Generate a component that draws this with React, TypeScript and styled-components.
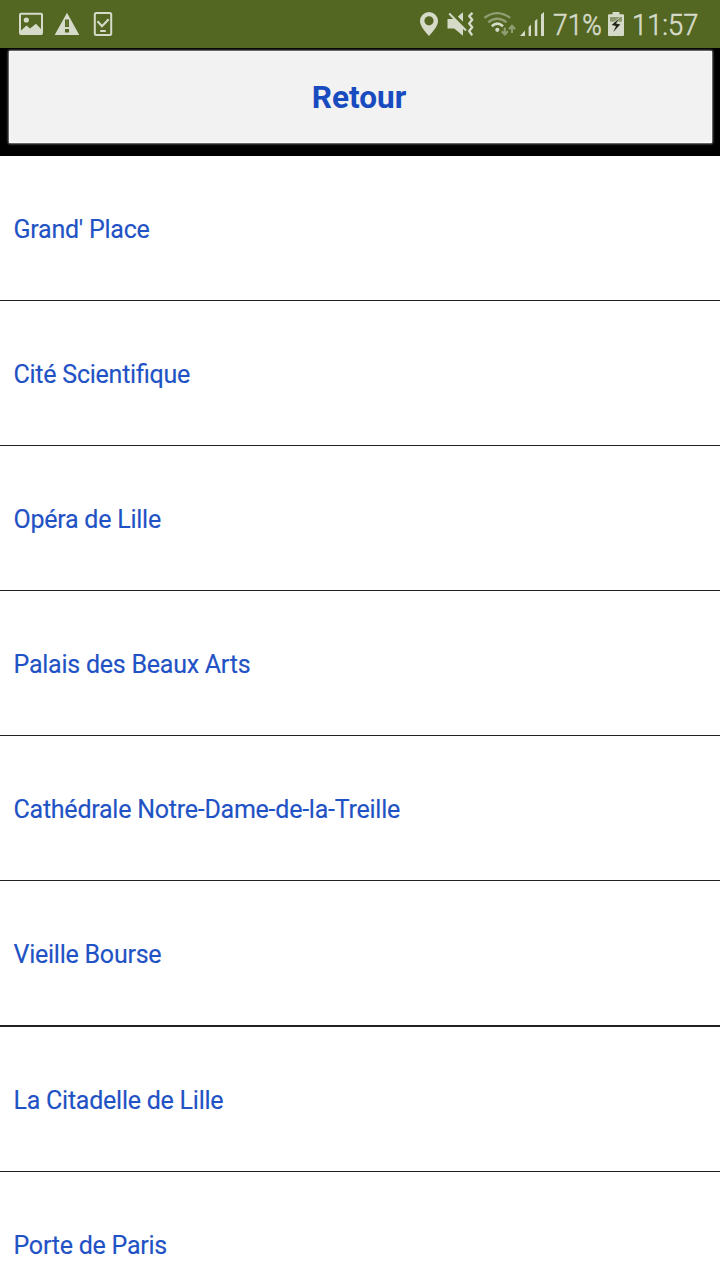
import React from "react";
import styled, { createGlobalStyle } from "styled-components";

const GlobalStyle = createGlobalStyle`
  * { box-sizing: border-box; }
  html, body { margin: 0; padding: 0; }
  body { background: #fff; font-family: Roboto, sans-serif; overflow: hidden; }
`;

const Screen = styled.div`
  width: 720px;
  height: 1280px;
  overflow: hidden;
  display: flex;
  flex-direction: column;
  background: #fff;
`;

const StatusBar = styled.header`
  flex: none;
  height: 48px;
  display: flex;
  justify-content: space-between;
  background: #536723;
  color: #d6dbc9;
`;

const StatusGroup = styled.div<{ $start?: number }>`
  display: flex;
  align-items: center;
  padding-left: ${(p) => p.$start ?? 0}px;
`;

const Icon = styled.svg<{ $gap?: number }>`
  display: block;
  flex: none;
  height: 24px;
  margin-right: ${(p) => p.$gap ?? 0}px;
  fill: currentColor;
`;

const StatusText = styled.div<{ $width: number; $scale: number; $gap: number }>`
  flex: none;
  width: ${(p) => p.$width}px;
  margin-right: ${(p) => p.$gap}px;
  font-size: 30px;
  line-height: 48px;
  white-space: nowrap;
  transform: translateY(1px) scaleX(${(p) => p.$scale});
  transform-origin: left center;
  font-weight: 300;
  -webkit-text-stroke: 0.6px currentColor;
`;

const Toolbar = styled.div`
  flex: none;
  height: 108px;
  padding: 3px 8px 13px 9px;
  background: #000;
`;

const BackButton = styled.button`
  display: block;
  width: 100%;
  height: 92px;
  padding: 2px 0 0;
  border: 0;
  border-radius: 1px;
  background: #f2f2f2;
  box-shadow: inset 0 0 1px 1px #fafafa, 0 0 2px 1px #8a8a8a;
  color: #184bbf;
  font: 700 31.5px/1 Roboto, sans-serif;
  text-indent: -3px;
`;

const List = styled.ul`
  margin: 0;
  padding: 0;
  list-style: none;
`;

const Row = styled.li<{ $thick?: boolean }>`
  display: flex;
  align-items: center;
  height: ${(p) => (p.$thick ? 146 : 145)}px;
  padding: 4px 0 0 13.5px;
  border-bottom: ${(p) => (p.$thick ? 2 : 1)}px solid #212121;
  color: #1f52c4;
  font-size: 25px;
  line-height: 30px;
  letter-spacing: -0.24px;
  font-feature-settings: "liga" 1;
  white-space: nowrap;
  -webkit-text-stroke: 0.15px currentColor;
`;

const places = [
  "Grand' Place",
  "Cité Scientifique",
  "Opéra de Lille",
  "Palais des Beaux Arts",
  "Cathédrale Notre-Dame-de-la-Treille",
  "Vieille Bourse",
  "La Citadelle de Lille",
  "Porte de Paris",
];

const PictureIcon = () => (
  <Icon width="24" viewBox="0 0 24 24" $gap={11}>
    <path fillRule="evenodd" d="M2 .8H22Q24 .8 24 2.8V21Q24 23 22 23H2Q0 23 0 21V2.8Q0 .8 2 .8ZM2 2.8V18.5L7.5 13.5L11 16.5L17 11.8L22 17V2.8Z" />
    <circle cx="7.3" cy="8" r="2.6" />
  </Icon>
);

const WarningIcon = () => (
  <Icon width="26" viewBox="0 0 26 24" $gap={13}>
    <path fillRule="evenodd" d="M13 .8L25.3 23H.7ZM11 7.5V15H15V7.5ZM11 17V20.5H15V17Z" />
    <path d="M12.4 8.5H13.6V14H12.4Z" opacity=".25" />
  </Icon>
);

const DeviceIcon = () => (
  <Icon width="20" viewBox="0 0 20 24">
    <rect x="1.8" y="1.1" width="16.4" height="21.8" rx="1.5" fill="none" stroke="currentColor" strokeWidth="2" />
    <path d="M4.5 9.3L9 14.2L15.7 7.2" fill="none" stroke="currentColor" strokeWidth="2.1" />
    <path d="M7.2 18H12.8V20H7.2Z" />
  </Icon>
);

const PinIcon = () => (
  <Icon width="18" viewBox="0 0 18 24" $gap={9}>
    <path fillRule="evenodd" d="M9 0A9 9 0 0 1 18 9C18 14 13 19.5 9 24C5 19.5 0 14 0 9A9 9 0 0 1 9 0ZM9 4.2A4.6 4.6 0 1 0 9 13.4A4.6 4.6 0 1 0 9 4.2Z" />
  </Icon>
);

const MuteIcon = () => (
  <Icon width="27" viewBox="0 0 27 24" $gap={10}>
    <path d="M.5 7H7.7L16 15.4V23.7L7.2 16.5H.5ZM10.8 4.6L16 .2V9.8Z" />
    <path d="M2.2 1.5L19 18.5" stroke="currentColor" strokeWidth="2" />
    <path d="M25.5 .8L22.2 4L25.2 7.8L22.2 11.5L25.2 15.2L22.2 19L25.2 23.3" fill="none" stroke="currentColor" strokeWidth="2.3" strokeLinejoin="round" />
  </Icon>
);

const WifiIcon = () => (
  <Icon width="32" viewBox="0 0 32 24" $gap={4}>
    <g fill="none" stroke="currentColor" strokeWidth="2.3">
      <path d="M.5 5.9Q13.3-3.6 26.2 5.9" opacity=".48" />
      <path d="M4.2 10.3Q13.3 3.3 22.5 10.3" opacity=".48" />
      <path d="M7.8 14.2Q13.3 9.2 19 14.2" strokeWidth="2.6" />
      <g opacity=".48" strokeWidth="2.1">
        <path d="M20.8 15.5V22.5M17.7 19.2L20.8 22.5L23.9 19.2" />
        <path d="M28 21V14M24.9 17.2L28 13.9L31.1 17.2" />
      </g>
    </g>
    <circle cx="13.3" cy="17.8" r="2.1" />
  </Icon>
);

const SignalIcon = () => (
  <Icon width="25" viewBox="0 0 25 24" $gap={8}>
    <path d="M0 24L5 18.6V24ZM8.6 24V14.9L11 12.5V24ZM14.8 24V9.1L17.3 6.7V24ZM21 24V2.5L24 0V24Z" />
  </Icon>
);

const BatteryIcon = () => (
  <Icon width="16" viewBox="0 0 16 24" $gap={8}>
    <path d="M4.5 0H11.5V2.2H15Q16 2.2 16 3.2V23Q16 24 15 24H1Q0 24 0 23V3.2Q0 2.2 1 2.2H4.5Z" />
    <path d="M2 5H14V9.7H2Z" fill="#8c996c" />
    <path d="M11.8 4.8L2.2 13.2L7.1 14.6L4.6 21.2L13.8 12L9 10.9Z" fill="#d6dbc9" />
    <path d="M11 6.6L3.6 12.9L8 13.9L5.2 20L12.3 12.6L8 11.6Z" fill="#20251a" />
  </Icon>
);

export default function App() {
  return (
    <Screen>
      <GlobalStyle />
      <StatusBar>
        <StatusGroup $start={19}>
          <PictureIcon />
          <WarningIcon />
          <DeviceIcon />
        </StatusGroup>
        <StatusGroup>
          <PinIcon />
          <MuteIcon />
          <WifiIcon />
          <SignalIcon />
          <StatusText $width={49} $scale={0.88} $gap={6}>71%</StatusText>
          <BatteryIcon />
          <StatusText $width={67} $scale={0.91} $gap={21}>11:57</StatusText>
        </StatusGroup>
      </StatusBar>
      <Toolbar>
        <BackButton type="button">Retour</BackButton>
      </Toolbar>
      <List>
        {places.map((place, i) => (
          <Row key={place} $thick={i === 5}>{place}</Row>
        ))}
      </List>
    </Screen>
  );
}
